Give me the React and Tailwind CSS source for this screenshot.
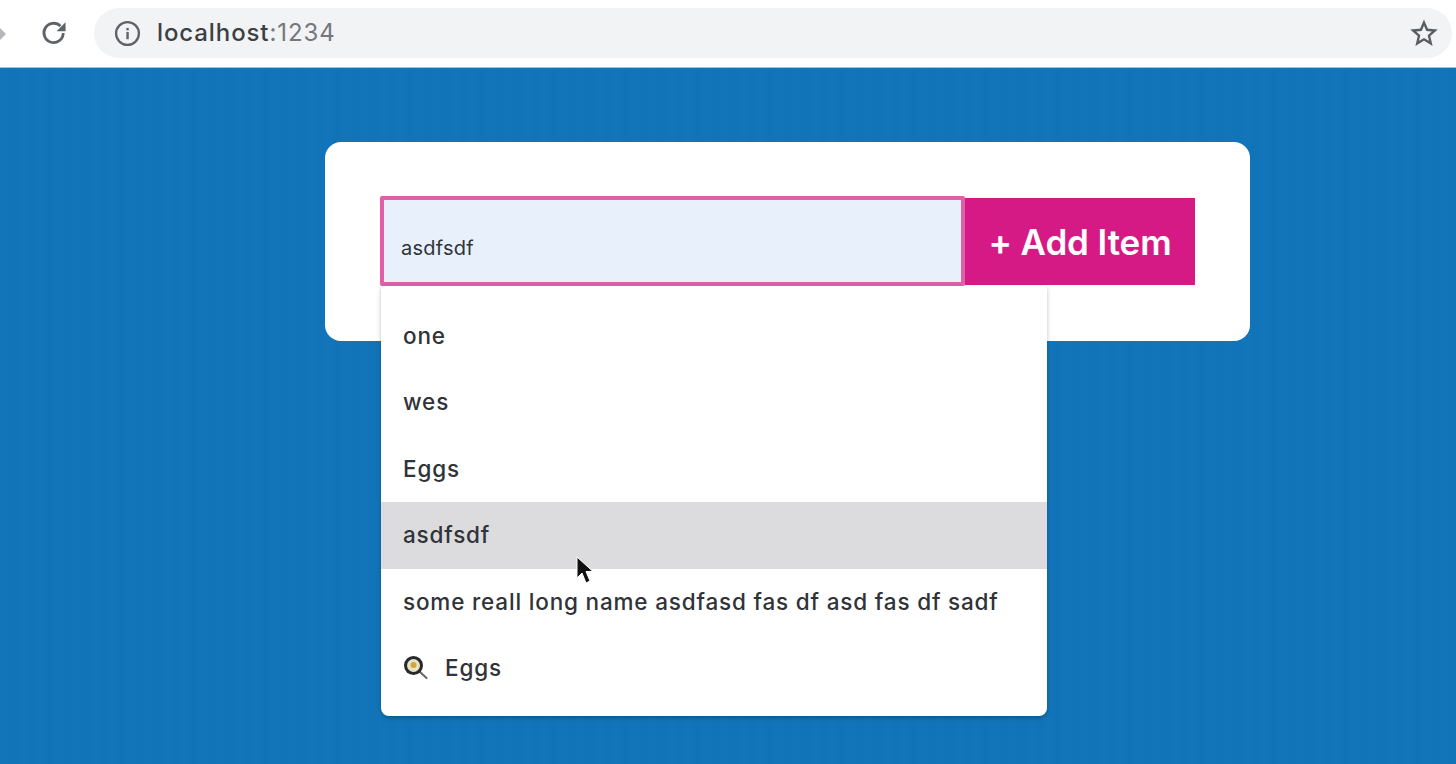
import React from "react";

const items = ["one", "wes", "Eggs", "asdfsdf", "some reall long name asdfasd fas df asd fas df sadf"];

function Reload() {
  return (
    <svg width="30" height="30" viewBox="0 0 28 28" fill="none" className="text-[#5f6368]">
      <path d="M22.6 14a9 9 0 1 1-2.6-6.4" stroke="currentColor" strokeWidth="2.6" strokeLinecap="butt" />
      <path d="M24.8 4v8.4h-8.4z" fill="currentColor" />
    </svg>
  );
}

function Info() {
  return (
    <svg width="27" height="27" viewBox="0 0 26 26" fill="none" className="text-[#5f6368]">
      <circle cx="13" cy="13" r="11" stroke="currentColor" strokeWidth="2.2" />
      <rect x="11.9" y="11.5" width="2.3" height="7" fill="currentColor" />
      <rect x="11.9" y="7.6" width="2.3" height="2.4" fill="currentColor" />
    </svg>
  );
}

function Star() {
  return (
    <svg width="28" height="28" viewBox="0 0 28 28" fill="none" className="text-[#5a5d61]">
      <path d="M14 3.6l3.1 7.2 7.8.7-5.9 5.2 1.8 7.7-6.8-4.1-6.8 4.1 1.8-7.700-5.900-5.200 7.800-.7z" stroke="currentColor" strokeWidth="2.4" strokeLinejoin="miter" />
    </svg>
  );
}

function Pan() {
  return (
    <svg width="26" height="26" viewBox="0 0 26 26" fill="none">
      <path d="M16.5 16.5l7 6.5" stroke="#6b6b6b" strokeWidth="2.2" strokeLinecap="round" />
      <circle cx="10.5" cy="10.5" r="9.500" fill="#26282b" />
      <circle cx="10.5" cy="10.5" r="6.500" fill="#e9e2c6" />
      <circle cx="10.5" cy="10" r="3" fill="#d2a63a" />
    </svg>
  );
}

function Cursor() {
  return (
    <svg width="20" height="30" viewBox="0 0 20 30" className="absolute left-[194px] top-[270px]">
      <path d="M2 1v21l5-5 4 10 4-2-4-9.500h7z" fill="#111" stroke="#fff" strokeWidth="1" />
    </svg>
  );
}

export default function App() {
  return (
    <div className="w-[1456px] h-[764px] overflow-hidden flex flex-col font-['Inter',sans-serif] bg-[repeating-linear-gradient(90deg,#1275b9_0px,#1275b9_9px,#1174b8_9px,#1174b8_18px)]">
      <header className="h-[68px] shrink-0 bg-white flex items-center pl-[39px] pt-[1px] pb-[2px] pr-[4px] border-b border-[#9cc3de] relative">
        <span className="absolute left-0 top-[28px] w-0 h-0 border-y-[6px] border-y-transparent border-l-[6px] border-l-[#b5b7ba]" />
        <Reload />
        <div className="ml-[25px] flex-1 h-[50px] rounded-[25px] bg-[#f1f3f4] flex items-center pl-[20px] pr-[14px]">
          <Info />
          <span className="ml-[16px] text-[24px] font-medium leading-none tracking-[0.9px] text-[#3c3f43]">
            localhost<span className="font-normal text-[#74777b]">:1234</span>
          </span>
          <span className="ml-auto"><Star /></span>
        </div>
      </header>
      <main className="flex-1 pt-[74px] pl-[325px]">
        <div className="relative w-[925px] h-[199px] rounded-[16px] bg-white pt-[54px] pl-[55px]">
          <div className="flex items-center">
            <div className="w-[585px] h-[90px] border-[4px] border-[#e060a8] bg-[#e8f0fb] flex items-center pl-[17px] pt-[14px] rounded-[2px] text-[20px] tracking-[0.25px] text-[#2f3338]">
              asdfsdf
            </div>
            <button className="w-[230px] h-[87px] bg-[#d51a85] text-white text-[35px] font-semibold pt-[3px] tracking-[-0.1px]">
              + Add Item
            </button>
          </div>
          <ul className="absolute left-[56px] top-[144px] w-[666px] h-[430px] bg-white rounded-b-[8px] rounded-t-[2px] pt-[16.500px] shadow-[0_2px_4px_rgba(0,0,0,0.25)]">
            {items.map((t) => (
              <li key={t} className={`h-[66.500px] flex items-center pl-[22px] text-[22.500px] font-medium text-[#303338] tracking-[0.82px] ${t === "asdfsdf" ? "bg-[#dcdcde]" : ""}`}>
                {t}
              </li>
            ))}
            <li className="h-[66.500px] flex items-center pl-[22px] text-[22.500px] font-medium text-[#303338] tracking-[0.82px]">
              <Pan />
              <span className="ml-[16px]">Eggs</span>
            </li>
            <Cursor />
          </ul>
        </div>
      </main>
    </div>
  );
}
